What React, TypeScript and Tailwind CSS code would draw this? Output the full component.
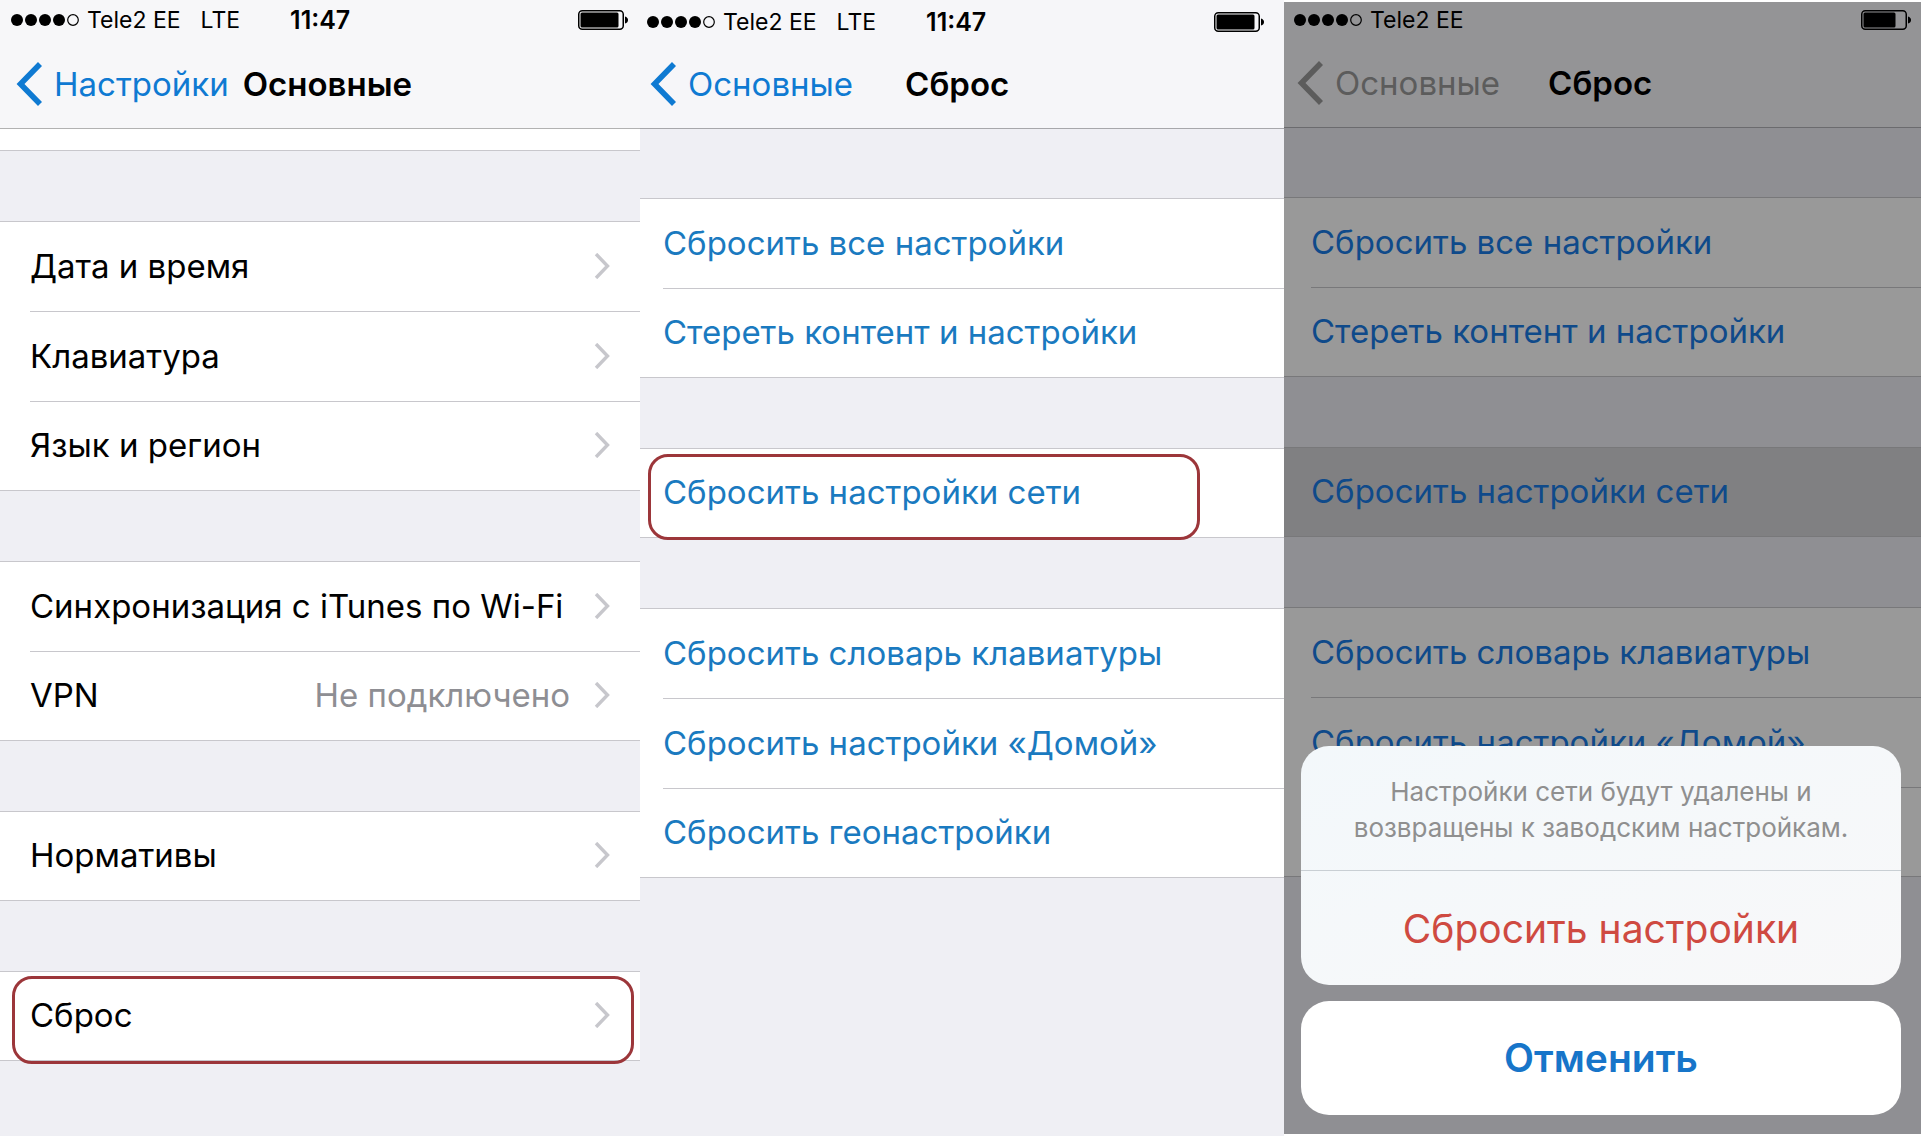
import type { ReactNode } from "react"

type Row = { label: string; value?: string; boxed?: boolean; pressed?: boolean }

const BackIcon = () => (
    <svg width="26" height="44" viewBox="0 0 26 44" fill="none" stroke="currentColor" strokeWidth="5.6">
        <path d="M24 2 L4.5 22 L24 42" />
    </svg>
)

const Chevron = () => (
    <svg width="16" height="26" viewBox="0 0 16 26" fill="none" stroke="#c7c7cc" strokeWidth="3.4">
        <path d="M2 1 L13.5 13 L2 25" />
    </svg>
)

const Signal = () => (
    <svg width="68" height="12" viewBox="0 0 68 12" fill="currentColor">
        <circle cx="6" cy="6" r="6" />
        <circle cx="20" cy="6" r="6" />
        <circle cx="34" cy="6" r="6" />
        <circle cx="48" cy="6" r="6" />
        <circle cx="62" cy="6" r="5.3" fill="none" stroke="currentColor" strokeWidth="1.2" />
    </svg>
)

const Battery = ({ level }: { level: number }) => (
    <svg width="50" height="20" viewBox="0 0 50 20" fill="currentColor">
        <rect x="0.75" y="0.75" width="44.5" height="18.5" rx="3.5" fill="none" stroke="currentColor" strokeWidth="1.5" />
        <rect x="2.5" y="2.5" width={level} height="15" rx="1.5" />
        <path d="M47 6.5 Q50 7.5 50 10 Q50 12.5 47 13.5 Z" />
    </svg>
)

const StatusBar = ({ network, time, level, className }: { network?: string; time?: string; level: number; className: string }) => (
    <div className={`flex items-center text-[23px] leading-6 ${className}`}>
        <Signal />
        <span className="ml-2">Tele2 EE</span>
        {network && <span className="ml-5">{network}</span>}
        {time && <span className="ml-[50px] text-[25px] font-semibold">{time}</span>}
        <span className="ml-auto"><Battery level={level} /></span>
    </div>
)

const NavBar = ({ back, title, className, linkClass }: { back: string; title: string; className: string; linkClass: string }) => (
    <nav className={`flex h-[88px] items-center text-[33px] leading-10 ${className}`}>
        <a href="#" className={`flex items-center gap-3 ${linkClass}`}>
            <BackIcon />
            {back}
        </a>
        <h1 className="font-semibold">{title}</h1>
    </nav>
)

const Header = ({ children, className }: { children: ReactNode; className: string }) => (
    <header className={`border-b ${className}`}>{children}</header>
)

type GroupProps = { rows: Row[]; inset: string; line: string; rowClass: string; box?: string; arrows?: boolean }

const Group = ({ rows, inset, line, rowClass, box, arrows }: GroupProps) => (
    <ul className={`border-y ${line} ${rowClass}`}>
        {rows.map((row, i) => (
            <li key={i} className={`relative ${inset} ${row.pressed ? "bg-[#808082]" : ""}`}>
                <button className={`flex w-full items-center pb-0.5 text-left text-[33px] leading-10 ${i < rows.length - 1 ? `h-[90px] border-b ${line}` : "h-[88px]"}`}>
                    <span>{row.label}</span>
                    {row.value && <span className="ml-auto text-[#8e8e93]">{row.value}</span>}
                    {arrows && (
                        <span className={`mr-[30px] ${row.value ? "ml-6" : "ml-auto"}`}><Chevron /></span>
                    )}
                </button>
                {row.boxed && <span className={`pointer-events-none absolute rounded-[20px] border-3 border-[#9c363a] ${box}`} />}
            </li>
        ))}
    </ul>
)

const general: Row[][] = [
    [{ label: "Дата и время" }, { label: "Клавиатура" }, { label: "Язык и регион" }],
    [{ label: "Синхронизация с iTunes по Wi-Fi" }, { label: "VPN", value: "Не подключено" }],
    [{ label: "Нормативы" }],
    [{ label: "Сброс", boxed: true }],
]

const reset: Row[][] = [
    [{ label: "Сбросить все настройки" }, { label: "Стереть контент и настройки" }],
    [{ label: "Сбросить настройки сети", boxed: true }],
    [{ label: "Сбросить словарь клавиатуры" }, { label: "Сбросить настройки «Домой»" }, { label: "Сбросить геонастройки" }],
]

// the last row is fully covered by the action sheet
const resetPressed: Row[][] = [
    reset[0],
    [{ label: "Сбросить настройки сети", pressed: true }],
    [reset[2][0], reset[2][1], { label: "" }],
]

const App = () => {
    return (
        <div className="grid min-h-screen grid-cols-[640fr_644fr_638fr] bg-white font-['Inter',sans-serif] text-black">
            <section className="bg-[#efeff4]">
                <Header className="h-[129px] border-[#b2b2b2] bg-[#f7f7f9]">
                    <StatusBar network="LTE" time="11:47" level={38} className="h-10 pr-3 pl-[11px]" />
                    <NavBar back="Настройки" title="Основные" linkClass="text-[#0f7ad2]" className="gap-[14px] pl-4" />
                </Header>
                <div className="h-[22px] border-b border-[#c8c7cc] bg-white" />
                <div className="flex flex-col gap-[70px] pt-[70px]">
                    {general.map((rows, i) => (
                        <Group key={i} rows={rows} arrows inset="pl-[30px]" line="border-[#c8c7cc]" rowClass="bg-white" box="top-1 right-[6px] -bottom-1 left-3" />
                    ))}
                </div>
            </section>

            <section className="bg-[#efeff4]">
                <Header className="h-[129px] border-[#a7a7ab] bg-[#f6f6f9]">
                    <StatusBar network="LTE" time="11:47" level={38} className="h-10 pt-1 pr-5 pl-[7px]" />
                    <NavBar back="Основные" title="Сброс" linkClass="text-[#0f7ad2]" className="gap-[52px] pl-[10px]" />
                </Header>
                <div className="flex flex-col gap-[70px] pt-[69px]">
                    {reset.map((rows, i) => (
                        <Group key={i} rows={rows} inset="pl-[23px]" line="border-[#c8c7cc]" rowClass="bg-white text-[#1a7ac0]" box="top-[5px] right-21 -bottom-[3px] left-2" />
                    ))}
                </div>
            </section>

            <section className="relative border-y-2 border-r border-white bg-[#8f8f93]">
                <Header className="h-[126px] border-[#6b6b6e] bg-[#949496]">
                    <StatusBar level={32} className="h-9 pr-[10px] pl-[10px]" />
                    <NavBar back="Основные" title="Сброс" linkClass="text-[#5c5c5c]" className="gap-12 pt-0.5 pl-[13px]" />
                </Header>
                <div className="flex flex-col gap-[70px] pt-[69px]">
                    {resetPressed.map((rows, i) => (
                        <Group key={i} rows={rows} inset="pl-[27px]" line="border-[#78787a]" rowClass="bg-[#999999] text-[#0f4a8a]" />
                    ))}
                </div>
                <div role="dialog" aria-label="Сбросить настройки" className="absolute inset-x-0 bottom-0 flex flex-col gap-4 pr-5 pb-[19px] pl-[17px] text-center">
                    <div className="overflow-hidden rounded-[28px] bg-linear-to-br from-[#f3f8fb] to-[#f8f8f9]">
                        <p className="border-b border-[#c9cfd4] px-10 pt-7 pb-6 text-[26px] leading-9 text-[#8f8f8f]">
                            Настройки сети будут удалены и возвращены к заводским настройкам.
                        </p>
                        <button className="h-[114px] w-full pt-0.5 text-[39px] text-[#cf4a41]">Сбросить настройки</button>
                    </div>
                    <button className="h-[114px] rounded-[28px] bg-white text-[39px] font-semibold text-[#1775c9]">Отменить</button>
                </div>
            </section>
        </div>
    )
}

export default App
